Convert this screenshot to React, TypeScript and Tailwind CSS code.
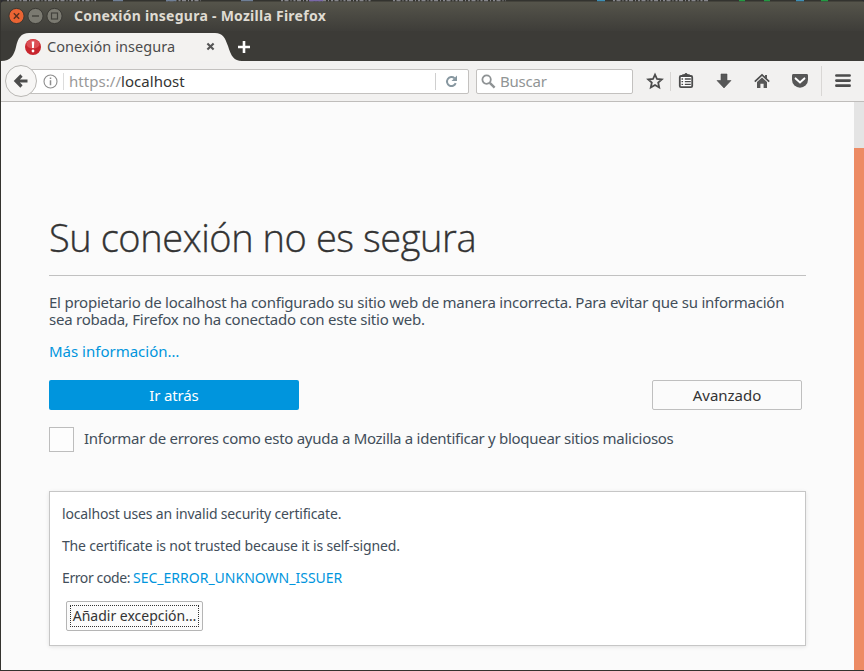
import React from "react";

const ink = "#4c4c4c";

function DesktopEdge() {
  return (
    <svg className="absolute left-0 top-0 h-[3px] w-[864px]" viewBox="0 0 864 3">
      <rect width="864" height="1.5" fill="#33332f" />
      <path d="M6 .6H95M165 .6H200M280 .6H370M392 .6H505M612 .6H708" stroke="#85858a" strokeWidth="1.4" strokeDasharray="2 1.5 4 2 1 2" />
      <path d="M112 .6h10M165 .6h10M240 .6h12" stroke="#6f7f96" strokeWidth="1.4" />
      <path d="M308 .6h14" stroke="#7a68a8" strokeWidth="1.4" />
      <path d="M596 .6h8M795 .6h8" stroke="#3d8fb5" strokeWidth="1.4" />
      <path d="M738 .6h6M763 .6h6M820 .6h7" stroke="#239a43" strokeWidth="1.4" />
      <path d="M0 3V0H6C3 0 1 1 0 3ZM864 3V0H858C861 0 863 1 864 3Z" fill="#2b2b30" />
    </svg>
  );
}

function WindowButtons() {
  return (
    <svg className="h-[18px] w-[60px] shrink-0" viewBox="0 0 60 18" fill="none">
      <circle cx="11.5" cy="9" r="7.6" fill="#ea6433" stroke="#3a3732" />
      <path d="M8.8 6.3l5.4 5.4M14.2 6.3l-5.4 5.4" stroke="#57301f" strokeWidth="1.4" />
      <circle cx="30.5" cy="9" r="7.6" fill="#7b7a71" stroke="#3a3934" />
      <path d="M27 9h7" stroke="#42413c" strokeWidth="1.4" />
      <circle cx="49.5" cy="9" r="7.6" fill="#7b7a71" stroke="#3a3934" />
      <rect x="46.5" y="6" width="6" height="6" stroke="#42413c" strokeWidth="1.2" />
    </svg>
  );
}

function TitleBar() {
  return (
    <div className="relative flex h-[31px] shrink-0 items-center bg-linear-to-b from-[#57564c] to-[#3e3d39] pl-[4px]">
      <DesktopEdge />
      <WindowButtons />
      <span className="ml-[9px] text-[14px] font-bold tracking-[0.26px] text-[#dfdbd2]">Conexión insegura - Mozilla Firefox</span>
    </div>
  );
}

function TabStrip() {
  return (
    <div className="flex h-[30px] shrink-0 items-center bg-[#3c3b37]">
      <div className="relative flex h-[30px] w-[236px] items-center pl-[24px]">
        <svg className="absolute left-0 top-0 h-[30px] w-[242px]" viewBox="0 0 242 30">
          <path d="M0 30C10 30 13 24 15 16C17 7 20 2 28 2H214C222 2 224 7 227 15C230 25 233 30 241 30Z" fill="#f3f2f0" />
        </svg>
        <svg className="relative mt-px h-4 w-4 shrink-0" viewBox="0 0 16 16">
          <circle cx="8" cy="8" r="8" fill="#c8262e" />
          <ellipse cx="8" cy="5" rx="6.6" ry="4.5" fill="#dc4f55" />
          <path d="M6.7 2.5h2.6L8.9 9H7.1Z" fill="#fff" />
          <circle cx="8" cy="12" r="1.4" fill="#fff" />
        </svg>
        <span className="relative ml-[6px] mt-[2px] text-[14.5px] tracking-[0.05px] text-[#4c4c4c]">Conexión insegura</span>
        <svg className="absolute left-[205px] top-[11px] h-[9px] w-[9px]" viewBox="0 0 9 9">
          <path d="M1.4 1.4l6.2 6.2M7.6 1.4L1.4 7.6" stroke="#555" strokeWidth="2.1" />
        </svg>
      </div>
      <svg className="mt-[2px] h-[14px] w-[14px]" viewBox="0 0 14 14">
        <path d="M7 1v12M1 7h12" stroke="#fff" strokeWidth="2.6" />
      </svg>
    </div>
  );
}

function AddressBar() {
  return (
    <>
      <div className="relative z-10 flex h-8 w-8 shrink-0 items-center justify-center rounded-full border border-[#b9b7b4] bg-[#f7f6f5]">
        <svg className="h-4 w-4" viewBox="0 0 16 16" fill="none" stroke={ink}>
          <path d="M8.5 2.5L3 8l5.5 5.5M3.5 8H14.5" strokeWidth="3.2" />
        </svg>
      </div>
      <div className="-ml-[8px] flex h-[25px] w-[440px] shrink-0 items-center rounded-r-[2px] border border-[#c3c1bf] bg-white pl-[13px]">
        <svg className="h-[15px] w-[15px] shrink-0" viewBox="0 0 15 15" fill="none" stroke="#8d8d8d">
          <circle cx="7.5" cy="7.5" r="6.5" strokeWidth="1.1" />
          <path d="M7.5 6.2v5M7.5 3.4v1.6" strokeWidth="1.5" />
        </svg>
        <span className="ml-[5px] h-[17px] w-px bg-[#dcdcdc]" />
        <span className="ml-[5px] text-[15px] tracking-[0.04px] text-[#999]">https://<span className="text-[#333]">localhost</span></span>
        <span className="ml-auto h-[17px] w-px bg-[#cfcfcf]" />
        <svg className="ml-[9px] mr-[10px] h-[13px] w-[13px] shrink-0" viewBox="0 0 13 13" fill="none">
          <path d="M10.7 8.2A4.5 4.5 0 1 1 9.5 3.2" stroke="#8797a0" strokeWidth="2" />
          <path d="M12 .5V6H6.5Z" fill="#8797a0" />
        </svg>
      </div>
    </>
  );
}

function ToolbarIcons() {
  return (
    <svg className="ml-auto h-[40px] w-[224px] shrink-0" viewBox="640 61 224 40" fill="none">
      <path d="M655 74.6l2 4.4 4.8.5-3.6 3.2 1 4.8-4.2-2.5-4.2 2.5 1-4.8-3.6-3.2 4.8-.5Z" stroke={ink} strokeWidth="1.8" />
      <path d="M670.5 72v19" stroke="#d7d5d3" />
      <rect x="679.8" y="76" width="12.4" height="11.2" rx="1.2" fill="#fff" stroke={ink} strokeWidth="1.8" />
      <path d="M682.5 76v-1.2h1.8a1.8 1.8 0 0 1 3.4 0h1.8V76" fill={ink} stroke={ink} />
      <path d="M684.8 79h6M684.8 81.7h6M684.8 84.4h6M681.5 79h1.6M681.5 81.7h1.6M681.5 84.4h1.6" stroke={ink} strokeWidth="1.3" />
      <path d="M721 74h6v6.5h4l-7 7.5-7-7.5h4Z" fill="#575757" stroke={ink} strokeWidth=".6" />
      <path d="M754.8 81.6l7.2-6.8 7.2 6.8" stroke={ink} strokeWidth="1.7" />
      <path d="M757 82l5-4.6 5 4.6v6h-3.4v-4.2h-3.2V88H757ZM765 75h2v4l-2-2Z" fill="#575757" />
      <path d="M793.5 74h13c1 0 1.5.6 1.5 1.5v4.2a8 8 0 0 1-16 0v-4.2c0-.9.5-1.5 1.5-1.5Z" fill="#575757" />
      <path d="M795.6 78.4l4.4 4.1 4.4-4.1" stroke="#fff" strokeWidth="2" strokeLinecap="round" />
      <path d="M821.5 66v30" stroke="#d9d7d5" />
      <path d="M836.4 75.5h13.2M836.4 80.6h13.2M836.4 85.7h13.2" stroke={ink} strokeWidth="2.7" strokeLinecap="round" />
    </svg>
  );
}

function Toolbar() {
  return (
    <div className="flex h-[41px] shrink-0 items-center border-b border-[#bfbdbb] bg-[#f2f1f0] pl-[4px]">
      <AddressBar />
      <div className="ml-[7px] flex h-[25px] w-[157px] shrink-0 items-center rounded-[2px] border border-[#c3c1bf] bg-white pl-[4px]">
        <svg className="h-[15px] w-[15px] shrink-0" viewBox="0 0 15 15" fill="none" stroke="#8e9294">
          <circle cx="5.6" cy="5.6" r="4.2" strokeWidth="1.8" />
          <path d="M8.8 8.8l4.8 4.8" strokeWidth="2.4" />
        </svg>
        <span className="ml-[4px] text-[15px] tracking-[-0.2px] text-[#919595]">Buscar</span>
      </div>
      <ToolbarIcons />
    </div>
  );
}

function ErrorPage() {
  return (
    <main className="flex w-[853px] shrink-0 flex-col pl-[48px] text-[15px] text-[#424e5a]">
      <div className="mt-[104px] flex h-[70px] w-[757px] border-b border-[#c1c1c1]">
        <h1 className="font-['Open_Sans'] text-[38px] font-light leading-[62px] tracking-[-0.43px] text-[#333] [-webkit-text-stroke:0.35px_#333]">Su conexión no es segura</h1>
      </div>
      <p className="mt-[18px] leading-[17px] tracking-[-0.235px]">
        El propietario de localhost ha configurado su sitio web de manera incorrecta. Para evitar que su información
        <br />
        sea robada, Firefox no ha conectado con este sitio web.
      </p>
      <a className="mt-[14px] block leading-[18px] text-[#0095dd]">Más información…</a>
      <div className="mt-[20px] flex w-[753px] justify-between">
        <button className="h-[30px] w-[250px] rounded-[2px] bg-[#0095dd] tracking-[-0.15px] text-white">Ir atrás</button>
        <button className="h-[30px] w-[150px] rounded-[2px] border border-[#bfbfbf] bg-[#fbfbfb] text-[#333]">Avanzado</button>
      </div>
      <label className="mt-[17px] flex h-[25px] items-center">
        <span className="h-[25px] w-[25px] border border-[#bdbdbd] bg-[#fdfdfd]" />
        <span className="-mt-[2px] ml-[10px] tracking-[-0.285px]">Informar de errores como esto ayuda a Mozilla a identificar y bloquear sitios maliciosos</span>
      </label>
      <section className="mt-[39px] h-[155px] w-[757px] border border-[#c6c6c6] bg-white pl-[12px] pt-[13px] text-[14px] leading-[18px] shadow-[0_1px_4px_rgba(0,0,0,0.1)]">
        <p className="tracking-[-0.17px]">localhost uses an invalid security certificate.</p>
        <p className="mt-[14px] tracking-[-0.17px]">The certificate is not trusted because it is self-signed.</p>
        <p className="mt-[14px] flex">
          <span className="tracking-[-0.4px]">Error code:</span>
          <a className="ml-[3px] text-[#0095dd]">SEC_ERROR_UNKNOWN_ISSUER</a>
        </p>
        <button className="ml-[4px] mt-[14px] flex h-[30px] w-[137px] items-center justify-center rounded-[2px] border border-[#b5b5b5] bg-[#fbfbfb] text-[#333]">
          <span className="flex h-[22px] w-[129px] items-center justify-center border border-dotted border-[#333]">Añadir excepción…</span>
        </button>
      </section>
    </main>
  );
}

export default function App() {
  return (
    <div className="flex h-[671px] w-[864px] flex-col overflow-hidden whitespace-nowrap border-b border-l border-[#34332f] bg-[#fbfbfb] font-['Noto_Sans',sans-serif]">
      <TitleBar />
      <TabStrip />
      <Toolbar />
      <div className="flex min-h-0 flex-1">
        <ErrorPage />
        <aside className="flex flex-1 flex-col bg-[#e4e4e4] pt-[46px]">
          <div className="flex-1 bg-[#ed8b64]" />
        </aside>
      </div>
    </div>
  );
}
